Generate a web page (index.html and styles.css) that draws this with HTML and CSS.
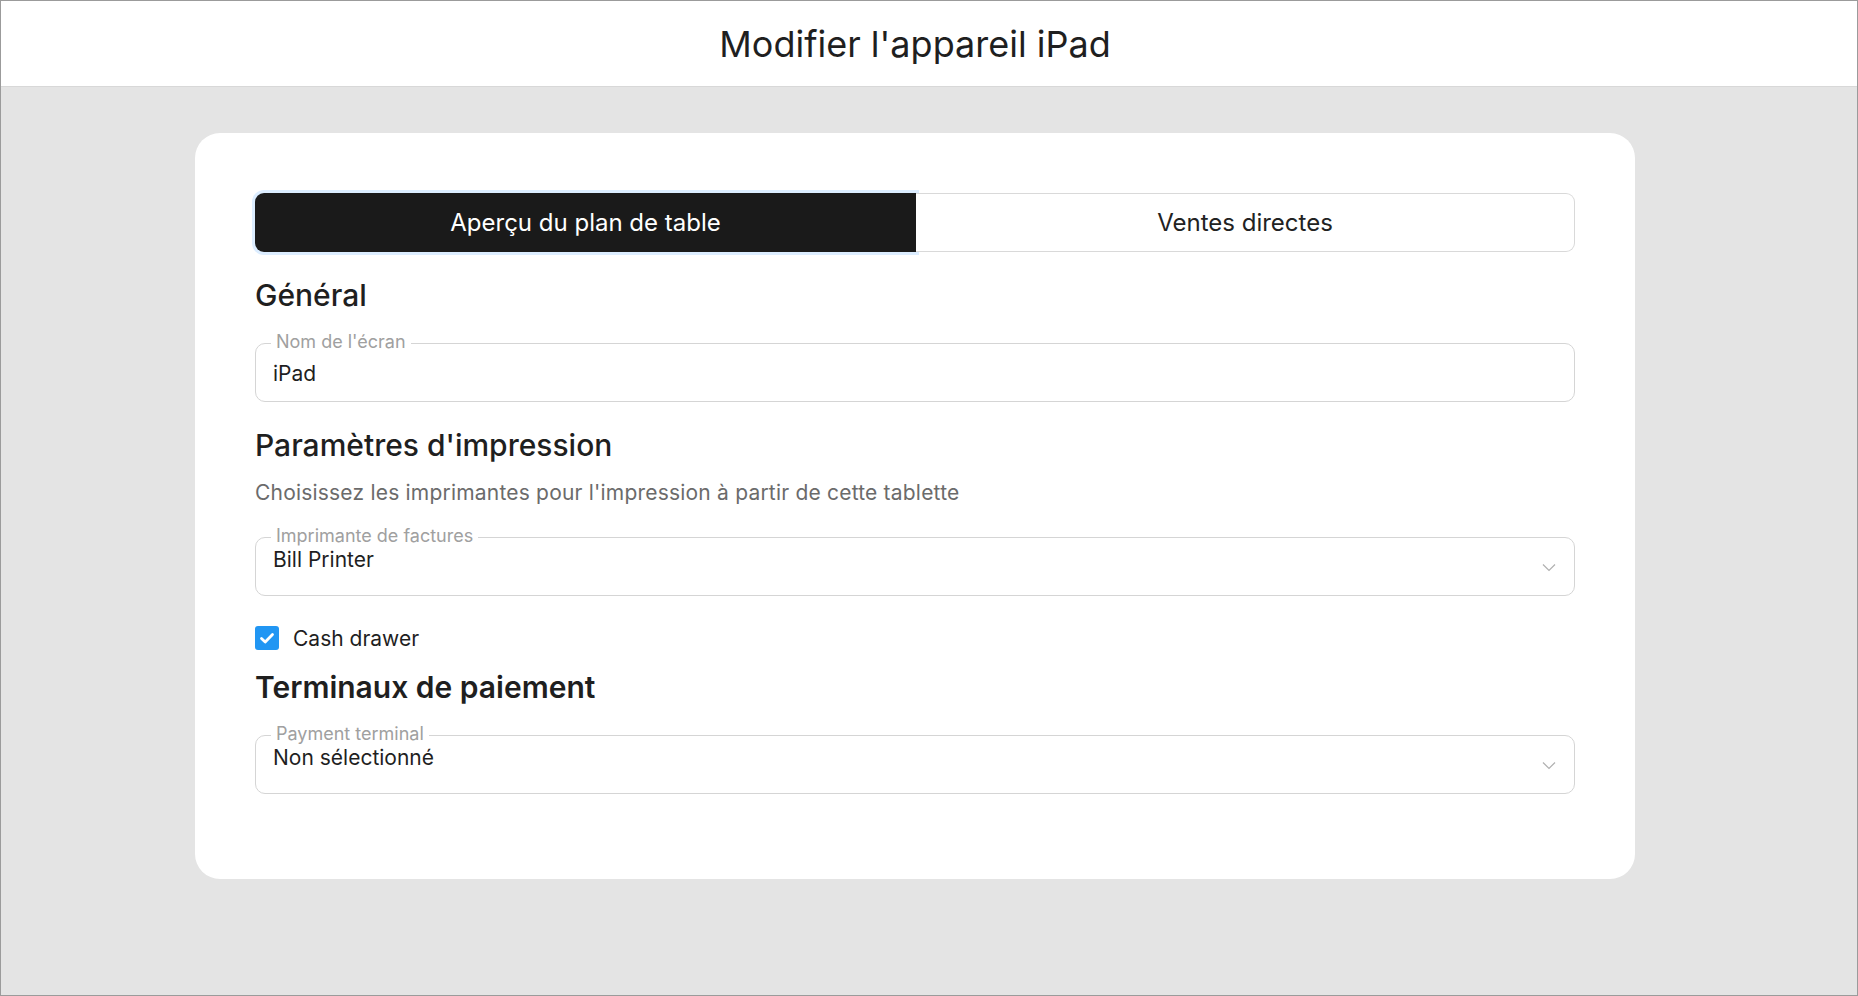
FILE: index.html
```html
<!DOCTYPE html>
<html>
<head>
    <title>Modifier l'appareil iPad</title>
    <link rel="stylesheet" href="styles.css">
</head>
<body>
    <div class="frame">
        <header class="top-bar">
            <h1>Modifier l'appareil iPad</h1>
        </header>

        <main class="content">
            <div class="card">
                <div class="tabs">
                    <button class="tab active">Aperçu du plan de table</button>
                    <button class="tab">Ventes directes</button>
                </div>

                <h2>Général</h2>
                <div class="field">
                    <span class="field-label">Nom de l'écran</span>
                    <div class="field-value">iPad</div>
                </div>

                <h2>Paramètres d'impression</h2>
                <p class="hint">Choisissez les imprimantes pour l'impression à partir de cette tablette</p>
                <div class="field select">
                    <span class="field-label">Imprimante de factures</span>
                    <div class="field-value">Bill Printer</div>
                    <svg class="chevron" width="14" height="9" viewBox="0 0 14 9">
                        <path d="M1 1.5 L7 7.5 L13 1.5" fill="none" stroke="#b0b0b0" stroke-width="1.2"/>
                    </svg>
                </div>

                <label class="check-row">
                    <span class="checkbox">
                        <svg width="24" height="24" viewBox="0 0 24 24">
                            <path d="M6.5 12.5 L10.2 16 L17.5 8.5" fill="none" stroke="#fff" stroke-width="2.8" stroke-linecap="round" stroke-linejoin="round"/>
                        </svg>
                    </span>
                    Cash drawer
                </label>

                <h2 class="tight">Terminaux de paiement</h2>
                <div class="field select">
                    <span class="field-label">Payment terminal</span>
                    <div class="field-value">Non sélectionné</div>
                    <svg class="chevron" width="14" height="9" viewBox="0 0 14 9">
                        <path d="M1 1.5 L7 7.5 L13 1.5" fill="none" stroke="#b0b0b0" stroke-width="1.2"/>
                    </svg>
                </div>
            </div>
        </main>
    </div>
</body>
</html>
```

FILE: styles.css
```css
* {
    margin: 0;
    padding: 0;
    box-sizing: border-box;
    font-family: Inter, "Noto Sans", sans-serif;
}

body {
    background: #e4e4e4;
}

.frame {
    height: 100vh;
    border: 1px solid #9b9b9b;
    background: #e4e4e4;
}

.top-bar {
    height: 86px;
    background: white;
    border-bottom: 1px solid #d8d8d8;
    display: flex;
    align-items: center;
    justify-content: center;
    padding-right: 28px;
}

.top-bar h1 {
    font-size: 36px;
    font-weight: 400;
    color: #1f1f1f;
}

.content {
    padding: 46px 28px 0 0;
}

.card {
    width: 1440px;
    margin: 0 auto;
    background: white;
    border-radius: 25px;
    padding: 60px 60px 85px;
}

.tabs {
    display: grid;
    grid-template-columns: 661px 1fr;
    height: 59px;
}

.tab {
    border: 1px solid #d9d9d9;
    border-left: none;
    background: white;
    color: #222;
    font-size: 24px;
    font-weight: 400;
    border-radius: 0 9px 9px 0;
    cursor: pointer;
}

.tab.active {
    background: #1a1a1a;
    color: white;
    border: none;
    border-radius: 9px 0 0 9px;
    box-shadow: 0 0 0 3px #dcedff;
}

h2 {
    font-size: 30px;
    line-height: 34px;
    font-weight: 500;
    color: #1f1f1f;
    margin-top: 26px;
}

h2.tight {
    margin-top: 20px;
    font-weight: 600;
}

.hint {
    font-size: 21px;
    line-height: 24px;
    letter-spacing: 0.2px;
    color: #6b6b6b;
    margin-top: 19px;
}

.field {
    position: relative;
    height: 59px;
    border: 1px solid #d5d5d5;
    border-radius: 10px;
    padding: 18px 17px 0;
    margin-top: 31px;
}

.hint + .field {
    margin-top: 32px;
}

.field.select {
    padding-top: 10px;
}

.field-label {
    position: absolute;
    top: -13px;
    left: 15px;
    padding: 0 5px;
    background: white;
    color: #a0a0a0;
    font-size: 18px;
    line-height: 22px;
}

.field-value {
    font-size: 21px;
    line-height: 24px;
    color: #1f1f1f;
}

.chevron {
    position: absolute;
    right: 18px;
    top: 25px;
}

.check-row {
    display: flex;
    align-items: center;
    gap: 14px;
    margin-top: 30px;
    height: 24px;
    font-size: 21px;
    color: #1f1f1f;
    cursor: pointer;
}

.checkbox {
    width: 24px;
    height: 24px;
    border-radius: 3px;
    background: #2196f3;
    display: flex;
}
```
